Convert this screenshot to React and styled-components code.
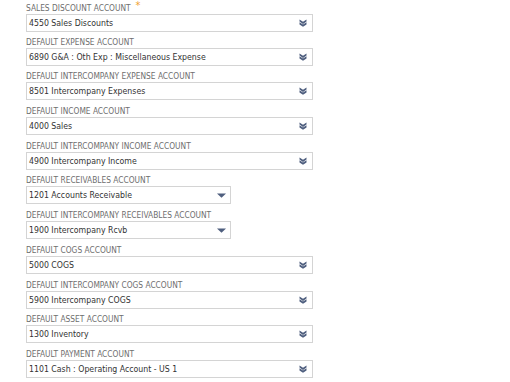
import React from 'react'
import styled, { createGlobalStyle } from 'styled-components';

const fields = [
    { label: 'SALES DISCOUNT ACCOUNT', value: '4550 Sales Discounts', required: true },
    { label: 'DEFAULT EXPENSE ACCOUNT', value: '6890 G&A : Oth Exp : Miscellaneous Expense' },
    { label: 'DEFAULT INTERCOMPANY EXPENSE ACCOUNT', value: '8501 Intercompany Expenses' },
    { label: 'DEFAULT INCOME ACCOUNT', value: '4000 Sales' },
    { label: 'DEFAULT INTERCOMPANY INCOME ACCOUNT', value: '4900 Intercompany Income' },
    { label: 'DEFAULT RECEIVABLES ACCOUNT', value: '1201 Accounts Receivable', narrow: true },
    { label: 'DEFAULT INTERCOMPANY RECEIVABLES ACCOUNT', value: '1900 Intercompany Rcvb', narrow: true },
    { label: 'DEFAULT COGS ACCOUNT', value: '5000 COGS' },
    { label: 'DEFAULT INTERCOMPANY COGS ACCOUNT', value: '5900 Intercompany COGS' },
    { label: 'DEFAULT ASSET ACCOUNT', value: '1300 Inventory' },
    { label: 'DEFAULT PAYMENT ACCOUNT', value: '1101 Cash : Operating Account - US 1' },
];

const DoubleChevron = () => (
    <svg width="8" height="8" viewBox="0 0 8 8">
        <path d="M0.5 0.5 L4 2.8 L7.5 0.5 L7.5 2.6 L4 4.9 L0.5 2.6 Z" fill="#4f5f7f" />
        <path d="M0.5 3.3 L4 5.6 L7.5 3.3 L7.5 5.4 L4 7.7 L0.5 5.4 Z" fill="#4f5f7f" />
    </svg>
);

const Triangle = () => (
    <svg width="9" height="5" viewBox="0 0 9 5">
        <path d="M0 0.5 L9 0.5 L4.5 4.8 Z" fill="#4f5f7f" />
    </svg>
);

export default function App() {
    return (
        <>
            <GlobalStyle />
            <Form>
                {fields.map((f) => (
                    <Field key={f.label}>
                        <Label>
                            {f.label}
                            {f.required && <Star>*</Star>}
                        </Label>
                        <Select narrow={f.narrow ? 1 : 0}>
                            <Value>{f.value}</Value>
                            <Arrow narrow={f.narrow ? 1 : 0}>{f.narrow ? <Triangle /> : <DoubleChevron />}</Arrow>
                        </Select>
                    </Field>
                ))}
            </Form>
        </>
    )
}

const GlobalStyle = createGlobalStyle`
    body {
        margin: 0;
        background: #fff;
        font-family: "DejaVu Sans Condensed", "DejaVu Sans", sans-serif;
    }
`;

const Form = styled.div`
    display: flex;
    flex-direction: column;
    padding: 2px 0 0 26px;
`;

const Field = styled.div`
    display: flex;
    flex-direction: column;
    height: 34.7px;
`;

const Label = styled.div`
    font-size: 8.3px;
    line-height: 11px;
    color: #6e6e6e;
    white-space: nowrap;
`;

const Star = styled.span`
    color: #f0a030;
    font-size: 11px;
    margin-left: 5px;
    position: relative;
    top: -2px;
`;

const Select = styled.div`
    display: flex;
    align-items: center;
    justify-content: space-between;
    box-sizing: border-box;
    width: ${(p) => (p.narrow ? '205px' : '287px')};
    height: 18px;
    border: 1px solid #d4d4d4;
    background: #fff;
    padding: 0 0 0 2px;
`;

const Value = styled.span`
    font-size: 8.7px;
    color: #333;
    white-space: nowrap;
`;

const Arrow = styled.span`
    display: flex;
    align-items: center;
    margin-right: ${(p) => (p.narrow ? '4px' : '5px')};
`;
